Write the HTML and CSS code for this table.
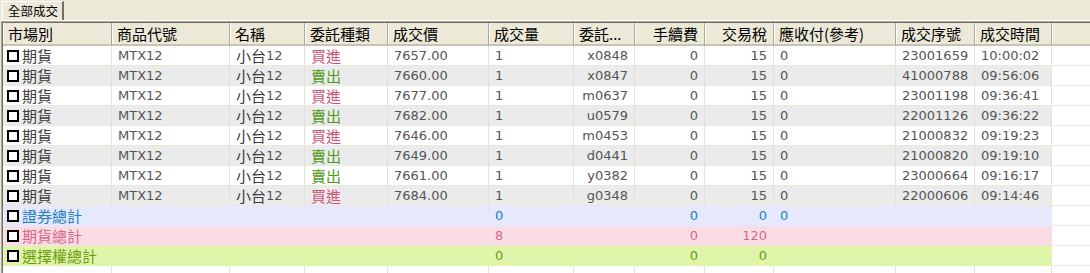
FILE: index.html
```html
<!DOCTYPE html>
<html lang="zh-Hant">
<head>
<meta charset="utf-8">
<title>全部成交</title>
<link rel="stylesheet" href="styles.css">
</head>
<body>
<div class="tabs"><div class="tab">全部成交</div></div>
<div class="panel"><div class="panel-inner">
  <div class="row head">
    <span>市場別</span><span>商品代號</span><span>名稱</span><span>委託種類</span><span>成交價</span><span>成交量</span><span>委託...</span><span class="r">手續費</span><span class="r">交易稅</span><span>應收付(參考)</span><span>成交序號</span><span>成交時間</span><span></span>
  </div>
  <div class="row">
    <span><i class="cb"></i><b class="zh">期貨</b></span><span>MTX12</span><span><b class="zh">小台</b>12</span><span class="buy"><b class="zh">買進</b></span><span>7657.00</span><span>1</span><span class="r">x0848</span><span class="r">0</span><span class="r">15</span><span>0</span><span>23001659</span><span>10:00:02</span><span></span>
  </div>
  <div class="row alt">
    <span><i class="cb"></i><b class="zh">期貨</b></span><span>MTX12</span><span><b class="zh">小台</b>12</span><span class="sell"><b class="zh">賣出</b></span><span>7660.00</span><span>1</span><span class="r">x0847</span><span class="r">0</span><span class="r">15</span><span>0</span><span>41000788</span><span>09:56:06</span><span></span>
  </div>
  <div class="row">
    <span><i class="cb"></i><b class="zh">期貨</b></span><span>MTX12</span><span><b class="zh">小台</b>12</span><span class="buy"><b class="zh">買進</b></span><span>7677.00</span><span>1</span><span class="r">m0637</span><span class="r">0</span><span class="r">15</span><span>0</span><span>23001198</span><span>09:36:41</span><span></span>
  </div>
  <div class="row alt">
    <span><i class="cb"></i><b class="zh">期貨</b></span><span>MTX12</span><span><b class="zh">小台</b>12</span><span class="sell"><b class="zh">賣出</b></span><span>7682.00</span><span>1</span><span class="r">u0579</span><span class="r">0</span><span class="r">15</span><span>0</span><span>22001126</span><span>09:36:22</span><span></span>
  </div>
  <div class="row">
    <span><i class="cb"></i><b class="zh">期貨</b></span><span>MTX12</span><span><b class="zh">小台</b>12</span><span class="buy"><b class="zh">買進</b></span><span>7646.00</span><span>1</span><span class="r">m0453</span><span class="r">0</span><span class="r">15</span><span>0</span><span>21000832</span><span>09:19:23</span><span></span>
  </div>
  <div class="row alt">
    <span><i class="cb"></i><b class="zh">期貨</b></span><span>MTX12</span><span><b class="zh">小台</b>12</span><span class="sell"><b class="zh">賣出</b></span><span>7649.00</span><span>1</span><span class="r">d0441</span><span class="r">0</span><span class="r">15</span><span>0</span><span>21000820</span><span>09:19:10</span><span></span>
  </div>
  <div class="row">
    <span><i class="cb"></i><b class="zh">期貨</b></span><span>MTX12</span><span><b class="zh">小台</b>12</span><span class="sell"><b class="zh">賣出</b></span><span>7661.00</span><span>1</span><span class="r">y0382</span><span class="r">0</span><span class="r">15</span><span>0</span><span>23000664</span><span>09:16:17</span><span></span>
  </div>
  <div class="row alt">
    <span><i class="cb"></i><b class="zh">期貨</b></span><span>MTX12</span><span><b class="zh">小台</b>12</span><span class="buy"><b class="zh">買進</b></span><span>7684.00</span><span>1</span><span class="r">g0348</span><span class="r">0</span><span class="r">15</span><span>0</span><span>22000606</span><span>09:14:46</span><span></span>
  </div>
  <div class="row sum sec">
    <span><i class="cb"></i><b class="zh">證券總計</b></span><span></span><span></span><span></span><span></span><span>0</span><span></span><span class="r">0</span><span class="r">0</span><span>0</span><span></span><span></span><span></span>
  </div>
  <div class="row sum fut">
    <span><i class="cb"></i><b class="zh">期貨總計</b></span><span></span><span></span><span></span><span></span><span>8</span><span></span><span class="r">0</span><span class="r">120</span><span></span><span></span><span></span><span></span>
  </div>
  <div class="row sum opt">
    <span><i class="cb"></i><b class="zh">選擇權總計</b></span><span></span><span></span><span></span><span></span><span>0</span><span></span><span class="r">0</span><span class="r">0</span><span></span><span></span><span></span><span></span>
  </div>
  <div class="row filler">
    <span></span><span></span><span></span><span></span><span></span><span></span><span></span><span></span><span></span><span></span><span></span><span></span><span></span>
  </div>
</div></div>
</body>
</html>
```
FILE: styles.css
```css
html, body {
  margin: 0;
  padding: 0;
}
body {
  background: #ece9d8;
  width: 1090px;
  height: 273px;
  overflow: hidden;
  font-family: "DejaVu Sans", "Noto Sans CJK TC", sans-serif;
  color: #555555;
}
.tabs {
  height: 21px;
  box-sizing: border-box;
  padding: 1px 0 0 2px;
  border-bottom: 1px solid #ffffff;
  display: flex;
}
.tab {
  width: 62px;
  height: 19px;
  box-sizing: border-box;
  border-top: 1px solid #ffffff;
  border-left: 1px solid #ffffff;
  border-right: 2px solid #716f64;
  font-family: "Noto Sans CJK TC", sans-serif;
  font-size: 12.5px;
  line-height: 18px;
  padding-left: 5px;
  color: #000;
  background: #ece9d8;
}
.panel {
  margin-left: 1px;
  border-top: 1px solid #aca899;
  border-left: 1px solid #aca899;
  background: #ffffff;
  height: 252px;
  box-sizing: border-box;
}
.panel-inner {
  border-top: 1px solid #716f64;
  border-left: 1px solid #716f64;
  height: 100%;
  box-sizing: border-box;
  overflow: hidden;
}
.row {
  display: grid;
  grid-template-columns: 109px 118px 75px 83px 101px 85px 61px 70px 69px 122px 79px 77px 1fr;
  height: 20px;
  font-size: 13px;
  background: #ffffff;
}
.row > span {
  display: flex;
  align-items: center;
  box-sizing: border-box;
  padding: 0 6px;
  white-space: nowrap;
  overflow: hidden;
  border-right: 1px solid #e4e1d5;
  border-bottom: 1px solid #ebe8de;
  line-height: 19px;
}
.row > span.r {
  justify-content: flex-end;
}
.row > span:first-child {
  padding-left: 4px;
}
.row > span:last-child {
  background: #ffffff;
  border-right: 0;
}
.zh {
  font-family: "Noto Sans CJK TC", sans-serif;
  font-size: 15px;
  font-weight: normal;
  color: #3c3c3c;
}
.alt {
  background: #ebebeb;
}
.head {
  height: 23px;
  background: #ece9d8;
  color: #000;
  font-family: "Noto Sans CJK TC", sans-serif;
  font-size: 15px;
}
.head > span {
  border-right: 1px solid #aca899;
  border-bottom: 2px solid #c8c4b4;
  box-shadow: inset 1px 0 0 #ffffff;
  padding-left: 5px;
  line-height: 20px;
}
.head > span:first-child {
  padding-left: 5px;
}
.head > span:last-child {
  background: #ece9d8;
}
.cb {
  display: inline-block;
  width: 12px;
  height: 12px;
  box-sizing: border-box;
  border: 2px solid #000;
  background: #fff;
  margin-right: 3px;
  flex: none;
}
.buy .zh {
  color: #d2527a;
}
.sell .zh {
  color: #4f9a1a;
}
.sec {
  background: #e6e8fd;
  color: #2180c0;
}
.fut {
  background: #f9dde4;
  color: #d9668a;
}
.opt {
  background: #dff5aa;
  color: #6d9c12;
}
.sum .zh {
  color: inherit;
}
.sum > span {
  border-right-color: transparent;
  border-bottom-color: transparent;
}
.sum > span:last-child {
  border-bottom-color: #ebe8de;
}
.filler {
  height: 10px;
}
.filler > span {
  border-bottom: 0;
}
```
